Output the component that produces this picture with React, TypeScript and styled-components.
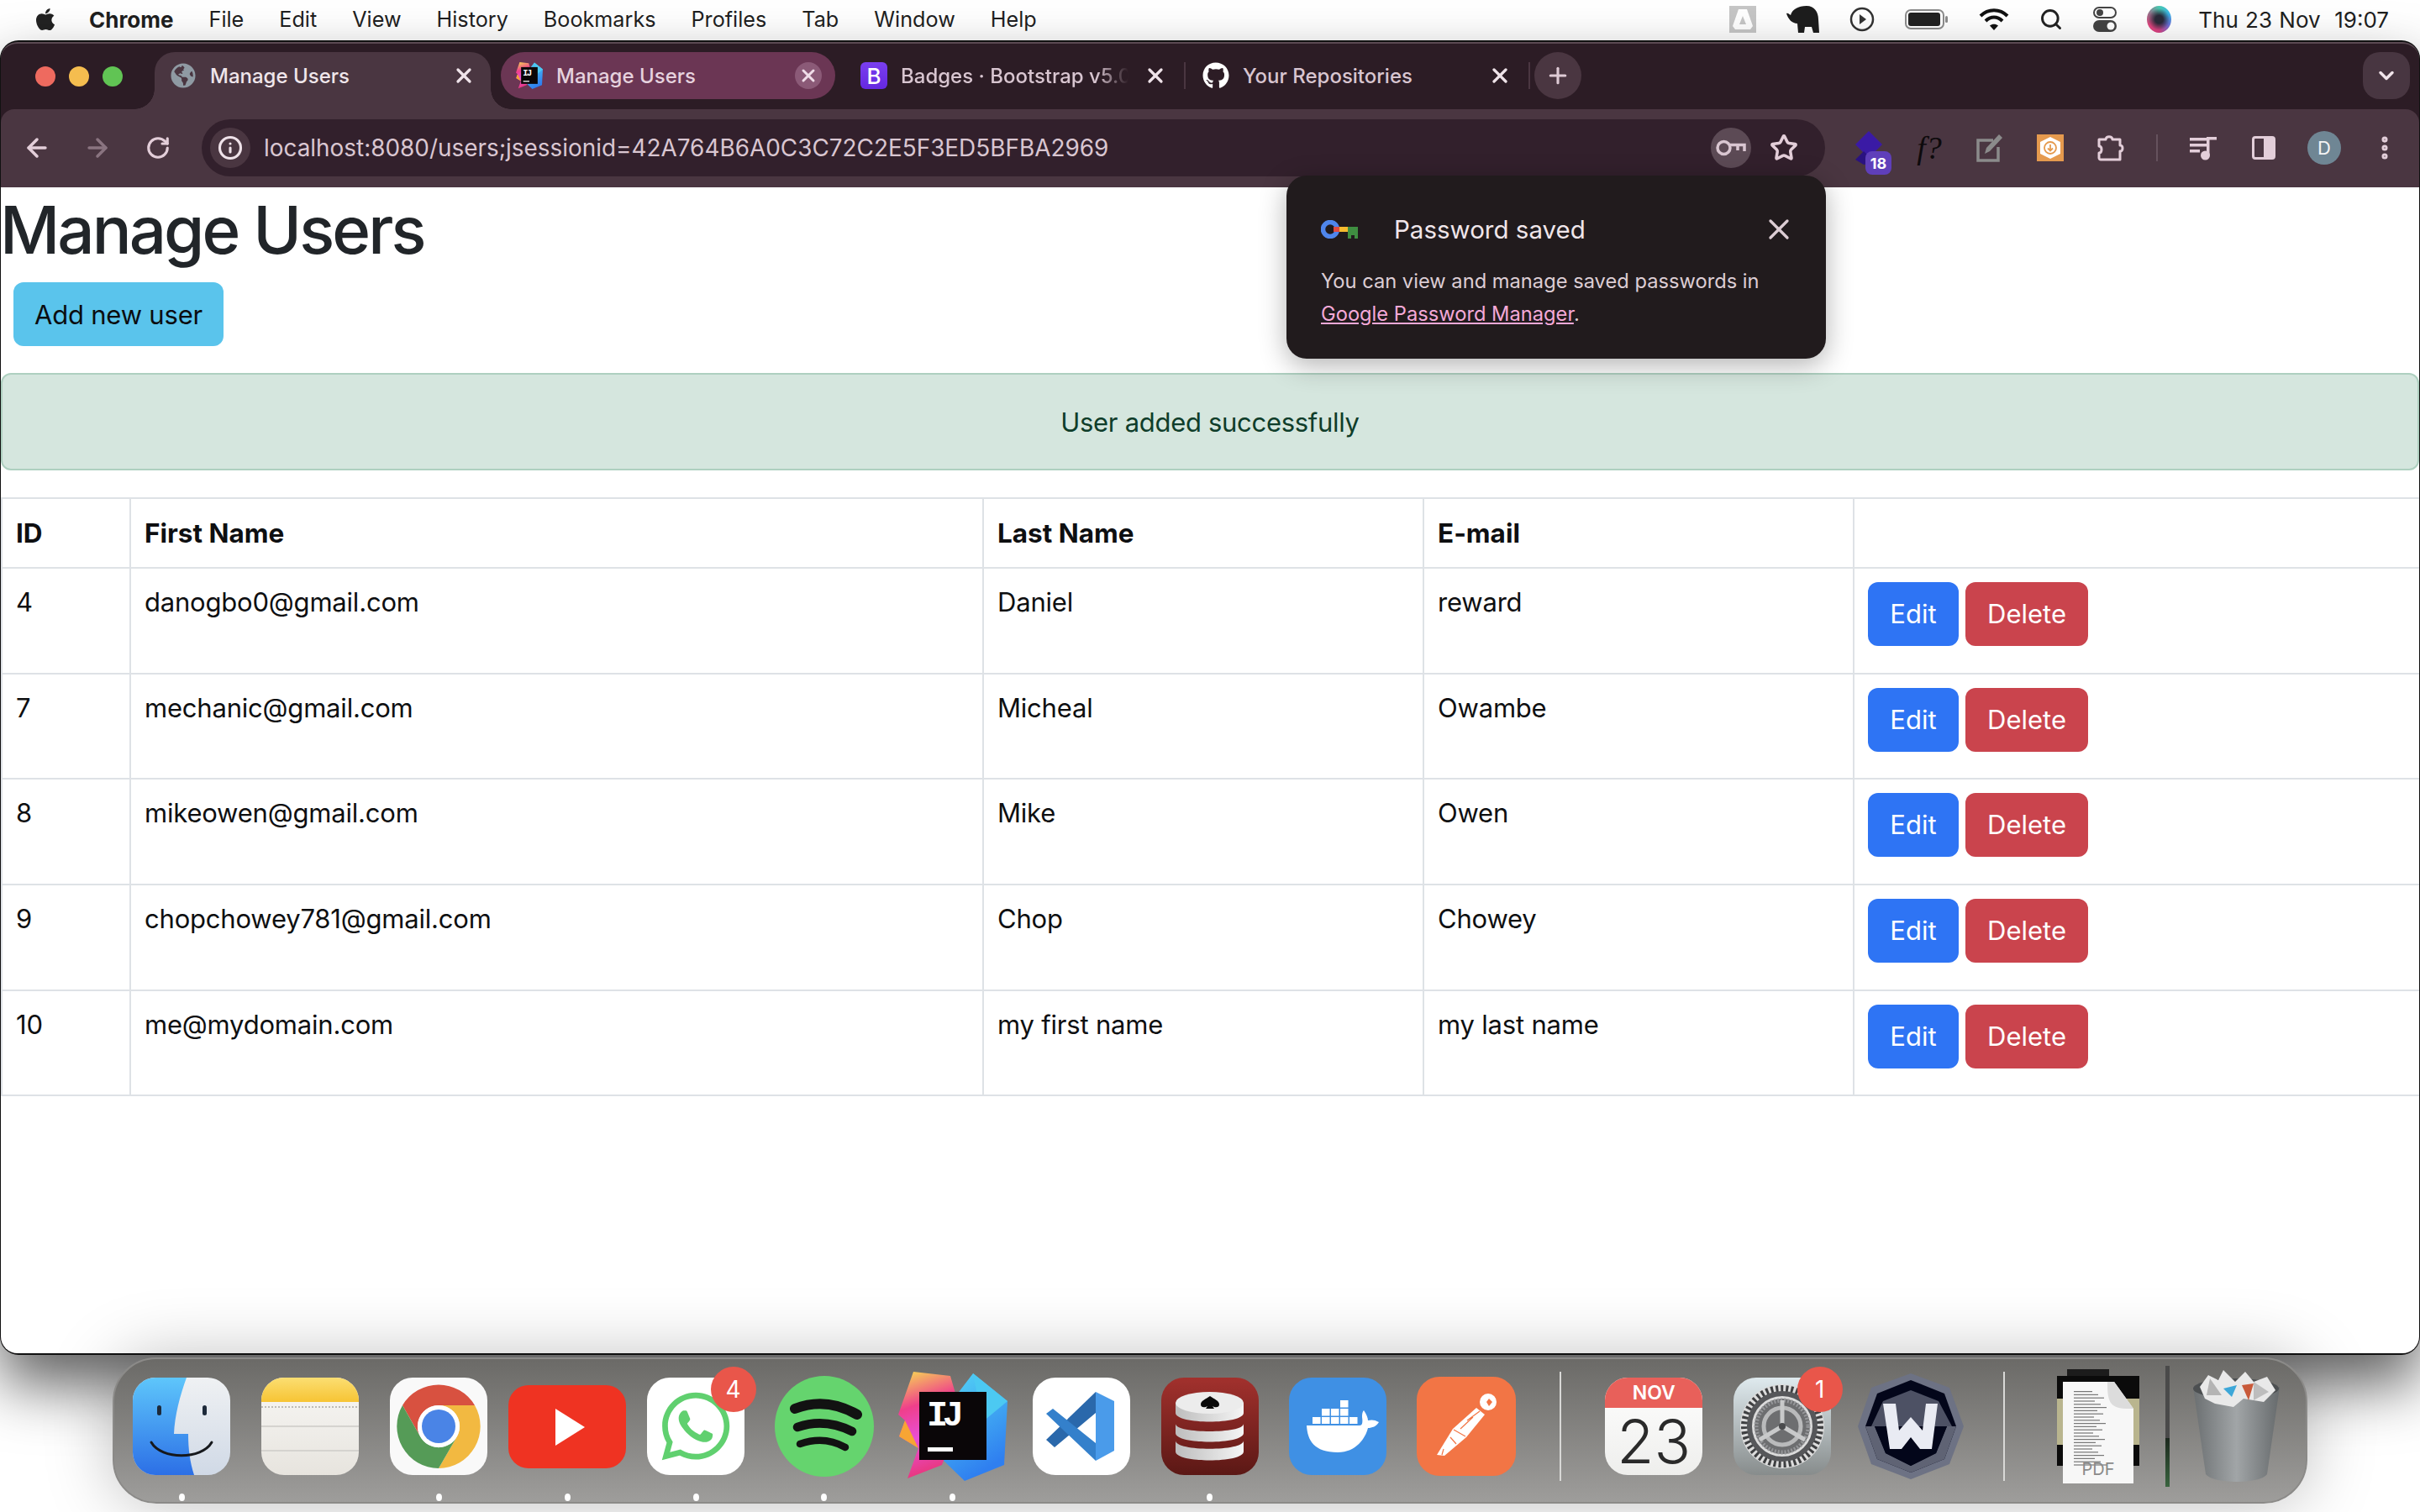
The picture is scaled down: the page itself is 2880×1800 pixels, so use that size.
import React from 'react'
import styled, { createGlobalStyle } from 'styled-components'
import { FaApple, FaGithub, FaGlobeAmericas, FaWhatsapp } from 'react-icons/fa'
import { ArrowLeft, ArrowRight, ChevronDown, EllipsisVertical, Info, Plus, RotateCw, Search, Star, X } from 'lucide-react'

const GlobalStyle = createGlobalStyle`
  html, body { margin: 0; padding: 0; background: #fff; }
  * { box-sizing: border-box; }
  body { font-family: Inter, "Liberation Sans", sans-serif; }
`

const users = [
  { id: 4, email: 'danogbo0@gmail.com', first: 'Daniel', last: 'reward' },
  { id: 7, email: 'mechanic@gmail.com', first: 'Micheal', last: 'Owambe' },
  { id: 8, email: 'mikeowen@gmail.com', first: 'Mike', last: 'Owen' },
  { id: 9, email: 'chopchowey781@gmail.com', first: 'Chop', last: 'Chowey' },
  { id: 10, email: 'me@mydomain.com', first: 'my first name', last: 'my last name' },
]

const menuItems = ['File', 'Edit', 'View', 'History', 'Bookmarks', 'Profiles', 'Tab', 'Window', 'Help']

const IntellijLogo = ({ size = 130 }: { size?: number }) => (
  <svg width={size} height={size} viewBox="0 0 130 130">
    <defs>
      <linearGradient id="ijBlue" x1="0" y1="0" x2="0.4" y2="1">
        <stop offset="0" stopColor="#55d8f5" />
        <stop offset="1" stopColor="#2f7ff0" />
      </linearGradient>
      <linearGradient id="ijPink" x1="0.3" y1="0" x2="0.5" y2="1">
        <stop offset="0" stopColor="#f6c65a" />
        <stop offset="0.3" stopColor="#ef3f8b" />
        <stop offset="0.6" stopColor="#e94fd8" />
        <stop offset="1" stopColor="#e8336f" />
      </linearGradient>
    </defs>
    <polygon points="89,2 130,35 126,111 79,130 52,104 60,40" fill="url(#ijBlue)" />
    <polygon points="89,2 130,35 100,60" fill="#4cc9f2" />
    <polygon points="18,0 62,5 75,50 52,111 11,127 24,91 1,77 8,58 0,51" fill="url(#ijPink)" />
    <polygon points="1,77 8,58 24,91" fill="#f7a534" />
    <rect x="25" y="24" width="80" height="81" fill="#0a0608" />
    <text x="34" y="64" fontFamily="Liberation Mono, monospace" fontWeight="700" fontSize="42" fill="#fff" textLength="44">IJ</text>
    <rect x="35" y="90" width="30" height="5" fill="#fff" />
  </svg>
)

const FinderIcon = () => (
  <svg width="116" height="116" viewBox="0 0 116 116">
    <defs>
      <linearGradient id="finderBlue" x1="0" y1="0" x2="0" y2="1">
        <stop offset="0" stopColor="#5ec6fb" />
        <stop offset="1" stopColor="#2c6fe6" />
      </linearGradient>
      <linearGradient id="finderLight" x1="0" y1="0" x2="0" y2="1">
        <stop offset="0" stopColor="#eff1f3" />
        <stop offset="1" stopColor="#d0d9e6" />
      </linearGradient>
    </defs>
    <rect width="116" height="116" rx="27" fill="url(#finderLight)" />
    <path d="M27 0 H64 C56 22 50 45 49 67 H66 C66 85 68 100 73 116 H27 A27 27 0 0 1 0 89 V27 A27 27 0 0 1 27 0 Z" fill="url(#finderBlue)" />
    <rect x="29" y="33" width="5" height="12" rx="2.5" fill="#1d2a3a" />
    <rect x="83" y="33" width="5" height="12" rx="2.5" fill="#1d2a3a" />
    <path d="M22 77 C34 98 82 98 94 77" fill="none" stroke="#16181c" strokeWidth="3" strokeLinecap="round" />
  </svg>
)

const NotesIcon = () => (
  <svg width="116" height="116" viewBox="0 0 116 116">
    <defs>
      <linearGradient id="notesTop" x1="0" y1="0" x2="0" y2="1">
        <stop offset="0" stopColor="#fbde72" />
        <stop offset="1" stopColor="#f7c434" />
      </linearGradient>
      <linearGradient id="notesBody" x1="0" y1="0" x2="0" y2="1">
        <stop offset="0" stopColor="#f8f7f5" />
        <stop offset="1" stopColor="#e7e4de" />
      </linearGradient>
      <clipPath id="notesClip"><rect width="116" height="116" rx="27" /></clipPath>
    </defs>
    <g clipPath="url(#notesClip)">
      <rect width="116" height="116" fill="url(#notesBody)" />
      <rect width="116" height="29" fill="url(#notesTop)" />
      <line x1="0" y1="35" x2="116" y2="35" stroke="#bdbbb6" strokeWidth="2" strokeDasharray="2 2" />
      <rect y="57" width="116" height="2" fill="#d5d3cf" />
      <rect y="86" width="116" height="2" fill="#d5d3cf" />
    </g>
  </svg>
)

const ChromeIcon = () => (
  <svg width="116" height="116" viewBox="0 0 116 116">
    <rect width="116" height="116" rx="27" fill="#f9f9f9" />
    <path d="M58 33 L101 33 A50 50 0 0 0 15 33 L36 70 A25 25 0 0 1 58 33 Z" fill="#d85140" />
    <path d="M101 33 A50 50 0 0 1 58 108 L80 70 A25 25 0 0 0 58 33 Z" fill="#f2b941" />
    <path d="M15 33 A50 50 0 0 0 58 108 L80 70 A25 25 0 0 1 36 70 Z" fill="#559b57" />
    <circle cx="58" cy="58" r="25" fill="#fff" />
    <circle cx="58" cy="58" r="20" fill="#4a84e6" />
  </svg>
)

const YoutubeIcon = () => (
  <svg width="140" height="99" viewBox="0 0 140 99">
    <rect width="140" height="99" rx="24" fill="#ef3322" />
    <polygon points="56,28 91,50 56,72" fill="#fff" />
  </svg>
)

const SpotifyIcon = () => (
  <svg width="118" height="120" viewBox="0 0 118 120">
    <ellipse cx="59" cy="60" rx="59" ry="60" fill="#65d46e" />
    <g fill="none" stroke="#121212" strokeLinecap="round">
      <path d="M24 39 C50 29 74 32 98 46" strokeWidth="12" />
      <path d="M27 61 C50 53 72 56 92 66" strokeWidth="10.5" />
      <path d="M30 81 C50 74 68 76 84 85" strokeWidth="8.5" />
    </g>
  </svg>
)

const VscodeIcon = () => (
  <svg width="116" height="116" viewBox="0 0 116 116">
    <rect width="116" height="116" rx="27" fill="#fff" />
    <path d="M75 17 V42 L26 83 L16 74 Z" fill="#2a68ab" />
    <path d="M16 43 L24 37 L75 78 V99 Z" fill="#3480cb" />
    <path d="M75 17 L97 28 V87 L75 99 Z" fill="#4a9bea" />
  </svg>
)

const DatabaseIcon = () => (
  <svg width="116" height="116" viewBox="0 0 116 116">
    <defs>
      <linearGradient id="dbBack" x1="0" y1="0" x2="0" y2="1">
        <stop offset="0" stopColor="#a2312d" />
        <stop offset="1" stopColor="#5b1815" />
      </linearGradient>
      <linearGradient id="dbSide" x1="0" y1="0" x2="1" y2="0">
        <stop offset="0" stopColor="#bdbdbd" />
        <stop offset="1" stopColor="#f5f5f5" />
      </linearGradient>
    </defs>
    <rect width="116" height="116" rx="27" fill="url(#dbBack)" />
    <path d="M17 75 C17 88 98 88 98 75 V88 C98 102 17 102 17 88 Z" fill="url(#dbSide)" />
    <path d="M17 55 C17 67 98 67 98 55 V66 C98 80 17 80 17 66 Z" fill="url(#dbSide)" />
    <path d="M17 30 V42 C17 56 98 56 98 42 V30 Z" fill="url(#dbSide)" />
    <ellipse cx="57.500" cy="30" rx="40.500" ry="13" fill="#ececec" />
    <path d="M58 22 C63 26 69 27 69 32 C69 36 64 36 61 34 L63 37 H53 L55 34 C52 36 47 36 47 32 C47 27 53 26 58 22 Z" fill="#0a0a0a" />
  </svg>
)

const DockerIcon = () => (
  <svg width="116" height="116" viewBox="0 0 116 116">
    <rect width="116" height="116" rx="27" fill="#3f90e4" />
    <g fill="#fff">
      {[28, 39, 50, 61, 72].map(x => <rect key={x} x={x} y="47" width="9.500" height="8" />)}
      {[39, 50, 61].map(x => <rect key={x} x={x} y="37" width="9.500" height="8.500" />)}
      <rect x="61" y="27" width="9.500" height="8.500" />
      <path d="M21 57 H84 C87 57 88 54 87 47 C87 42 88 40 89 39 C92 43 94 48 94 51 C98 50 102 50 107 53 C104 58 99 60 94 60 C91 72 80 89 58 89 C30 89 22 75 21 57 Z" />
    </g>
  </svg>
)

const PostmanIcon = () => (
  <svg width="118" height="118" viewBox="0 0 118 118">
    <rect width="118" height="118" rx="27" fill="#f27545" />
    <ellipse cx="85" cy="30" rx="10" ry="10" fill="#fff" />
    <path d="M86 26 L90 30 L86 35 L83 30 Z" fill="#f27545" />
    <path d="M71 37 L81 45 L59 72 L33 94 L24 93 L43 62 Z" fill="#fff" />
    <path d="M60 52 L75 41 M52 62 L67 48 M44 63 L58 71 M40 72 L47 80 M32 86 L30 93" stroke="#f27545" strokeWidth="1.200" />
  </svg>
)

const SettingsIcon = () => (
  <svg width="116" height="116" viewBox="0 0 116 116">
    <defs>
      <linearGradient id="setBack" x1="0" y1="0" x2="0" y2="1">
        <stop offset="0" stopColor="#dfeaee" />
        <stop offset="1" stopColor="#878c8c" />
      </linearGradient>
    </defs>
    <rect width="116" height="116" rx="27" fill="url(#setBack)" />
    <circle cx="58" cy="58" r="50" fill="#dcdcdc" />
    <circle cx="58" cy="58" r="45" fill="none" stroke="#3e3f41" strokeWidth="8" strokeDasharray="3 3" />
    <circle cx="58" cy="58" r="39" fill="none" stroke="#56575a" strokeWidth="6" />
    <circle cx="58" cy="58" r="33" fill="#6d6e70" />
    <circle cx="58" cy="58" r="31" fill="none" stroke="#96979a" strokeWidth="5" strokeDasharray="2 2" />
    <circle cx="58" cy="58" r="22" fill="none" stroke="#b9babb" strokeWidth="5" />
    <path d="M58 58 L58 27 M58 58 L31 74 M58 58 L85 74" stroke="#c8c9ca" strokeWidth="5" />
    <circle cx="58" cy="58" r="4" fill="#4a4b4d" />
  </svg>
)

const WindscribeIcon = () => (
  <svg width="126" height="126" viewBox="0 0 126 126">
    <polygon points="63,0 109,17 126,63 109,108 63,126 16,108 0,63 16,17" fill="#6d7284" />
    <polygon points="63,8 103,24 117,63 103,102 63,118 23,102 9,63 23,24" fill="#03061a" />
    <polygon points="63,20 96,33 112,63 16,63 30,33" fill="#4d5164" />
    <polygon points="9,63 20,63 33,95 63,110 93,95 106,63 117,63 103,102 63,118 23,102" fill="#5f6374" />
    <polygon points="20,63 33,95 63,110 93,95 106,63" fill="#03061a" />
    <path d="M30 36 H45 L49 68 L63 52 L77 68 L81 36 H95 L88 90 H74 L63 76 L52 90 H38 Z" fill="#e9ebf3" />
  </svg>
)

const PdfPreview = () => (
  <svg width="98" height="136" viewBox="0 0 98 136">
    <rect x="12" y="0" width="50" height="14" fill="#1c1c1c" />
    <rect x="0" y="8" width="98" height="107" fill="#0b0b0b" />
    <rect x="0" y="35" width="98" height="55" fill="#b9b58e" />
    <path d="M7 15 H68 L91 47 V136 H7 Z" fill="#f7f7f7" />
    <path d="M60 15 C60 40 62 48 91 47 L68 15 Z" fill="#dcdcdc" />
    {Array.from({ length: 24 }).map((_, i) => (
      <rect key={i} x="20" y={26 + i * 3.8} width={22 + ((i * 7) % 18)} height="1.200" fill="#777" />
    ))}
    <text x="49" y="126" textAnchor="middle" fontSize="20" fill="#8a8a8a" fontFamily="Inter, sans-serif">PDF</text>
  </svg>
)

const TrashIcon = () => (
  <svg width="103" height="134" viewBox="0 0 103 134">
    <defs>
      <linearGradient id="binSide" x1="0" y1="0" x2="1" y2="0">
        <stop offset="0" stopColor="#6b6f71" />
        <stop offset="0.5" stopColor="#a1a5a7" />
        <stop offset="1" stopColor="#666a6c" />
      </linearGradient>
    </defs>
    <path d="M0 20 C20 28 83 28 103 20 L88 124 C80 136 24 136 15 124 Z" fill="url(#binSide)" />
    <ellipse cx="51" cy="22" rx="51" ry="12" fill="#4c4f51" />
    <polygon points="8,20 18,6 30,12 36,0 50,14 62,2 72,14 88,8 98,24 84,38 60,34 48,44 26,40 14,34" fill="#e9e9e9" />
    <polygon points="20,10 34,30 16,30" fill="#b4b4b4" />
    <polygon points="72,14 90,26 72,36" fill="#bdbdbd" />
    <polygon points="36,22 52,18 46,32" fill="#3da7d8" />
    <polygon points="58,18 72,16 66,36" fill="#c85a3a" />
  </svg>
)

const KeyColored = () => (
  <svg width="44" height="22" viewBox="0 0 44 22">
    <circle cx="11" cy="11" r="8.500" fill="none" stroke="#4f86ec" strokeWidth="5.500" />
    <rect x="15" y="8" width="8" height="6" fill="#e04a3f" />
    <rect x="22" y="8" width="10" height="6" fill="#f6bb2e" />
    <path d="M32 8 H44 V22 H40 V18 H36 V22 H32 Z" fill="#3f8e41" />
  </svg>
)

const KeyOutline = () => (
  <svg width="36" height="20" viewBox="0 0 36 20" fill="none" stroke="#d9c6d1" strokeWidth="3.500">
    <circle cx="9.500" cy="10" r="7.500" />
    <path d="M17 6.500 H34 V14 M26 6.500 V13" />
  </svg>
)

const ExtStack = () => (
  <svg width="32" height="40" viewBox="0 0 32 40">
    <polygon points="16,0 32,16 16,32 0,16" fill="#3a1aa5" />
    <polygon points="10,24 24,38 10,40 0,34" fill="#2a1280" />
  </svg>
)

const PencilBox = () => (
  <svg width="32" height="34" viewBox="0 0 32 34" fill="none">
    <path d="M20 8 H2 V32 H26 V16" stroke="#8b8b8b" strokeWidth="3.500" />
    <path d="M10 24 L12 17 L27 1 L31 5 L16 21 Z" fill="#8b8b8b" />
  </svg>
)

const OrangeExt = () => (
  <svg width="32" height="32" viewBox="0 0 32 32">
    <rect width="32" height="32" fill="#e59a4e" />
    <polygon points="16,3 28,9 28,23 16,29 4,23 4,9" fill="#fff" />
    <circle cx="16" cy="16" r="7" fill="none" stroke="#e59a4e" strokeWidth="1.800" />
    <path d="M16 12 V19 M13 16.500 L16 19.500 L19 16.500" stroke="#e59a4e" strokeWidth="1.800" fill="none" />
  </svg>
)

const PuzzleOutline = () => (
  <svg width="34" height="32" viewBox="0 0 34 32" fill="none" stroke="#e3ced9" strokeWidth="3" strokeLinejoin="round">
    <path d="M3 6 H11 C11 1.500 19 1.500 19 6 H28 V13 C32 12.500 32 20.500 28 20 V30 H5 C4 30 3 29 3 28 V22 C7 22 7 14 3 14 Z" />
  </svg>
)

const MusicQueue = () => (
  <svg width="32" height="30" viewBox="0 0 32 30" fill="#e3ced9">
    <rect x="0" y="3" width="20" height="3.500" />
    <rect x="0" y="10" width="20" height="3.500" />
    <rect x="0" y="17" width="12" height="3.500" />
    <rect x="20" y="2" width="12" height="3.500" />
    <rect x="20" y="2" width="3.500" height="22" />
    <circle cx="18.500" cy="24" r="5.500" />
  </svg>
)

const SidePanel = () => (
  <svg width="28" height="28" viewBox="0 0 28 28">
    <rect x="1.500" y="1.500" width="25" height="25" rx="2.500" fill="none" stroke="#e3ced9" strokeWidth="3" />
    <rect x="14" y="2" width="12" height="24" fill="#e3ced9" />
  </svg>
)

const DriveGlyph = () => (
  <svg width="32" height="32" viewBox="0 0 32 32">
    <rect width="32" height="32" fill="#c6c6c6" />
    <path d="M11 4 H21 L28 24 L25 28 H7 L4 24 Z" fill="#fff" />
    <polygon points="16,12 20,22 12,22" fill="#c6c6c6" />
  </svg>
)

const Elephant = () => (
  <svg width="39" height="32" viewBox="0 0 39 32" fill="#1d1d1d">
    <path d="M0 9 C2 8 3 10 5 11 C7 4 14 0 24 0 C33 0 38 7 38 16 L39 32 H32 L30 25 H22 L21 32 H14 L13 21 C7 21 2 16 0 9 Z" />
  </svg>
)

const PlayRing = () => (
  <svg width="30" height="30" viewBox="0 0 30 30">
    <circle cx="15" cy="15" r="13" fill="none" stroke="#333" strokeWidth="2.500" />
    <polygon points="12,9 20,15 12,21" fill="#333" />
  </svg>
)

const BatteryGlyph = () => (
  <svg width="52" height="24" viewBox="0 0 52 24">
    <rect x="1" y="1" width="45" height="22" rx="6" fill="none" stroke="#8d8d8d" strokeWidth="2" />
    <rect x="4" y="4" width="38" height="16" rx="3" fill="#222" />
    <rect x="48" y="8" width="3" height="8" rx="1.500" fill="#8d8d8d" />
  </svg>
)

const WifiGlyph = () => (
  <svg width="36" height="28" viewBox="0 0 36 28" fill="none" stroke="#111" strokeWidth="4">
    <path d="M2 10 C11 1 25 1 34 10" />
    <path d="M8 16 C14 10 22 10 28 16" />
    <path d="M18 27 L13 21.500 C16 19 20 19 23 21.500 Z" fill="#111" stroke="none" />
  </svg>
)

const ControlGlyph = () => (
  <svg width="28" height="30" viewBox="0 0 28 30">
    <rect x="1" y="1" width="26" height="12" rx="6" fill="#fff" stroke="#444" strokeWidth="2" />
    <circle cx="8" cy="7" r="4" fill="#444" />
    <rect y="16" width="28" height="14" rx="7" fill="#444" />
    <circle cx="21" cy="23" r="4.500" fill="#fff" />
  </svg>
)

const Screen = styled.div`
  width: 2880px;
  height: 1800px;
  display: flex;
  flex-direction: column;
  overflow: hidden;
  background: #fff;
`

const MenuBar = styled.div`
  height: 48px;
  flex: none;
  display: flex;
  align-items: center;
  padding: 0 37px 2px 40px;
  color: #1f1f1f;
  font-size: 25.2px;
`

const AppleMark = styled.div`
  width: 28px;
  margin-right: 38px;
  display: flex;
  color: #222;
`

const AppName = styled.span`
  font-weight: 700;
  font-size: 26px;
  margin-right: 42px;
`

const MenuItem = styled.span`
  margin-right: 42px;
`

const StatusIcons = styled.div`
  margin-left: auto;
  display: flex;
  align-items: center;
  gap: 36px;
  color: #222;
`

const Siri = styled.div`
  width: 29px;
  height: 32px;
  border-radius: 50%;
  background: radial-gradient(circle, #2a2a3a 0 22%, transparent 60%), conic-gradient(#48c9b0, #3bb6e8, #6a6fd8, #d6407f, #e0457f, #9a6f8a, #48c9b0);
`

const Clock = styled.span`
  margin-left: 32px;
  font-size: 26px;
  word-spacing: 1px;
  white-space: pre;
`

const Window = styled.div`
  position: relative;
  z-index: 1;
  height: 1565px;
  flex: none;
  display: flex;
  flex-direction: column;
  background: #2c1c25;
  border: 1px solid #111;
  border-top-width: 2px;
  border-bottom-width: 2px;
  border-radius: 22px;
  box-shadow: 0 36px 70px rgba(0, 0, 0, 0.62);
`

const TabStrip = styled.div`
  height: 80px;
  flex: none;
  display: flex;
  align-items: flex-start;
  padding-top: 10px;
  border-top: 2px solid #5b4a53;
  border-radius: 20px 20px 0 0;
`

const Lights = styled.div`
  width: 183px;
  flex: none;
  display: flex;
  gap: 16px;
  padding: 17px 0 0 41px;
`

const Light = styled.span<{ $color: string }>`
  width: 24px;
  height: 24px;
  border-radius: 50%;
  background: ${p => p.$color};
`

const Tab = styled.div<{ $width: number; $kind: 'active' | 'group' | 'plain' }>`
  position: relative;
  flex: none;
  width: ${p => p.$width}px;
  height: ${p => (p.$kind === 'active' ? 68 : 56)}px;
  margin-right: ${p => (p.$kind === 'plain' ? 0 : 12)}px;
  padding: 0 16px 0 18px;
  padding-bottom: ${p => (p.$kind === 'active' ? 12 : 0)}px;
  display: flex;
  align-items: center;
  gap: 16px;
  font-size: 24px;
  font-weight: 500;
  color: ${p => (p.$kind === 'active' ? '#f0e6eb' : p.$kind === 'group' ? '#e6d2de' : '#d8c5d0')};
  background: ${p => (p.$kind === 'active' ? '#4a3641' : p.$kind === 'group' ? '#6b3654' : 'transparent')};
  border-radius: ${p => (p.$kind === 'active' ? '24px 24px 0 0' : p.$kind === 'group' ? '28px' : '0')};

  ${p =>
    p.$kind === 'active' &&
    `
    &::before, &::after {
      content: '';
      position: absolute;
      bottom: 0;
      width: 24px;
      height: 24px;
    }
    &::before {
      left: -24px;
      background: radial-gradient(circle at 0 0, transparent 23.5px, #4a3641 24px);
    }
    &::after {
      right: -24px;
      background: radial-gradient(circle at 100% 0, transparent 23.5px, #4a3641 24px);
    }
  `}
`

const Favicon = styled.div`
  width: 32px;
  height: 32px;
  flex: none;
  display: flex;
  align-items: center;
  justify-content: center;
`

const BootstrapMark = styled.div`
  width: 32px;
  height: 32px;
  border-radius: 6px;
  background: linear-gradient(#7a3ff0, #6528e0);
  color: #fff;
  font-size: 26px;
  display: flex;
  align-items: center;
  justify-content: center;
`

const TabTitle = styled.span<{ $fade?: boolean }>`
  flex: 1;
  min-width: 0;
  white-space: nowrap;
  overflow: hidden;
  ${p => p.$fade && 'mask-image: linear-gradient(to right, #000 86%, transparent);'}
`

const TabClose = styled.div<{ $circle?: boolean }>`
  width: 32px;
  height: 32px;
  flex: none;
  border-radius: 50%;
  display: flex;
  align-items: center;
  justify-content: center;
  background: ${p => (p.$circle ? '#8b5a77' : 'transparent')};
  color: ${p => (p.$circle ? '#f0dde8' : '#efe3e9')};
`

const TabDivider = styled.div`
  width: 2px;
  height: 32px;
  margin: 12px 2px 0;
  flex: none;
  background: #4a3641;
`

const NewTab = styled.div`
  width: 56px;
  height: 56px;
  margin-left: 3px;
  flex: none;
  border-radius: 50%;
  background: #4a3641;
  color: #dfcbd6;
  display: flex;
  align-items: center;
  justify-content: center;
`

const TabMenu = styled.div`
  width: 56px;
  height: 56px;
  margin: 0 11px 0 auto;
  flex: none;
  border-radius: 20px;
  background: #483641;
  color: #f0e4ea;
  display: flex;
  align-items: center;
  justify-content: center;
`

const Toolbar = styled.div`
  height: 93px;
  flex: none;
  display: flex;
  align-items: center;
  padding: 0 7px 1px 7px;
  background: #4a3641;
  border-radius: 16px 16px 0 0;
`

const ToolSlot = styled.div<{ $dim?: boolean }>`
  position: relative;
  width: 72px;
  height: 56px;
  flex: none;
  display: flex;
  align-items: center;
  justify-content: center;
  color: ${p => (p.$dim ? '#8a7480' : '#e3ced9')};
`

const Omnibox = styled.div`
  width: 1932px;
  height: 68px;
  margin: 0 16px 0 16px;
  flex: none;
  display: flex;
  align-items: center;
  padding: 0 32px 0 10px;
  border-radius: 34px;
  background: #32202c;
`

const SiteInfo = styled.div`
  width: 48px;
  height: 48px;
  flex: none;
  border-radius: 50%;
  background: #4a3641;
  color: #efe2e9;
  display: flex;
  align-items: center;
  justify-content: center;
`

const Url = styled.span`
  margin-left: 16px;
  font-size: 27.9px;
  color: #d9c6d1;
  white-space: nowrap;
`

const KeyButton = styled.div`
  width: 48px;
  height: 48px;
  margin-left: auto;
  border-radius: 50%;
  background: #5c4a55;
  display: flex;
  align-items: center;
  justify-content: center;
`

const StarButton = styled.div`
  margin-left: 22px;
  display: flex;
  color: #e3ced9;
`

const CountBadge = styled.span`
  position: absolute;
  left: 32px;
  top: 32px;
  width: 31px;
  height: 28px;
  border-radius: 8px;
  background: #5f3fba;
  color: #fff;
  font-size: 18px;
  font-weight: 700;
  display: flex;
  align-items: center;
  justify-content: center;
`

const FormulaGlyph = styled.span`
  font-family: "Liberation Serif", serif;
  font-style: italic;
  font-size: 38px;
  color: #0d0a0c;
`

const ToolDivider = styled.div`
  width: 2px;
  height: 32px;
  margin: 0 18px;
  flex: none;
  background: #65525d;
`

const Avatar = styled.div`
  width: 40px;
  height: 40px;
  border-radius: 50%;
  background: #6f8694;
  color: #f4f4f4;
  font-size: 22px;
  display: flex;
  align-items: center;
  justify-content: center;
`

const Page = styled.div`
  flex: 1;
  min-height: 0;
  background: #fff;
  color: #212529;
  border-radius: 0 0 20px 20px;
  overflow: hidden;
`

const Heading = styled.h1`
  margin: 3px 0 14px -1px;
  font-size: 78px;
  font-weight: 500;
  line-height: 96px;
  letter-spacing: -2.9px;
`

const AddButton = styled.button`
  display: block;
  width: 250px;
  height: 76px;
  margin-left: 15px;
  border: none;
  border-radius: 12px;
  background: #5ac4ec;
  color: #0b0d10;
  font: inherit;
  font-size: 31px;
  letter-spacing: -0.2px;
`

const Alert = styled.div`
  height: 116px;
  margin: 32px 0 32px;
  border: 2px solid #aed0c0;
  border-radius: 12px;
  background: #d5e6de;
  color: #0f3d2a;
  font-size: 31px;
  letter-spacing: -0.3px;
  display: flex;
  align-items: center;
  justify-content: center;
`

const Table = styled.table`
  width: 2878px;
  table-layout: fixed;
  border-collapse: collapse;
  font-size: 31px;
  letter-spacing: -0.2px;
  color: #0e0f11;
`

const HeadRow = styled.tr`
  height: 83px;
`

const BodyRow = styled.tr`
  height: 125.7px;
`

const HeadCell = styled.th`
  padding: 16px;
  border: 2px solid #dee2e6;
  text-align: left;
  font-size: 31.5px;
  font-weight: 700;
  letter-spacing: 0;
`

const Cell = styled.td`
  padding: 16px;
  border: 2px solid #dee2e6;
  vertical-align: top;
  line-height: 48px;
`

const ActionGroup = styled.div`
  display: flex;
  gap: 8px;
`

const ActionButton = styled.button<{ $tone: 'edit' | 'delete' }>`
  height: 76px;
  padding: 0;
  width: ${p => (p.$tone === 'edit' ? 108 : 146)}px;
  border: none;
  border-radius: 12px;
  background: ${p => (p.$tone === 'edit' ? '#2e74f4' : '#ca444d')};
  color: #fff;
  font: inherit;
`

const Popup = styled.div`
  position: absolute;
  left: 1530px;
  top: 159px;
  width: 642px;
  height: 218px;
  padding: 37px 36px 0 41px;
  border-radius: 24px;
  background: #211b1d;
  box-shadow: 0 8px 32px rgba(0, 0, 0, 0.3);
  color: #dccdd4;
  font-size: 23.700px;
`

const PopupHead = styled.div`
  display: flex;
  align-items: center;
  height: 54px;
  margin-bottom: 15px;
`

const PopupTitle = styled.span`
  margin-left: 43px;
  font-size: 29.500px;
  color: #f0e6ea;
`

const PopupClose = styled.div`
  margin-left: auto;
  display: flex;
  color: #dccdd4;
`

const PopupText = styled.p`
  margin: 0;
  line-height: 39px;
  white-space: nowrap;
`

const PopupLink = styled.a`
  color: #f4a9d8;
  text-decoration: underline;
`

const DockArea = styled.div`
  position: relative;
  z-index: 2;
  flex: 1;
  padding: 3px 134px 0;
`

const Dock = styled.div`
  height: 174px;
  display: flex;
  padding: 0 8px 0 4px;
  border: 2px solid #8b8a88;
  border-radius: 52px;
  background: linear-gradient(#6b6a67, #9e9d9b);
  box-shadow: 0 0 80px rgba(0, 0, 0, 0.26);
`

const DockSlot = styled.div<{ $width?: number }>`
  position: relative;
  width: ${p => p.$width ?? 152.9}px;
  flex: none;
  display: flex;
  align-items: center;
  justify-content: center;
  padding-bottom: 10px;
`

const WhiteTile = styled.div`
  width: 116px;
  height: 116px;
  border-radius: 27px;
  background: #fff;
  color: #60d06f;
  display: flex;
  align-items: center;
  justify-content: center;
`

const CalendarTile = styled.div`
  width: 116px;
  height: 116px;
  border-radius: 27px;
  overflow: hidden;
  background: linear-gradient(#fff, #eeeeec);
  display: flex;
  flex-direction: column;
  align-items: center;
  color: #2a2a2a;
`

const CalendarMonth = styled.div`
  width: 100%;
  height: 36px;
  background: #e8605a;
  color: #fff;
  font-size: 23px;
  font-weight: 600;
  display: flex;
  align-items: center;
  justify-content: center;
`

const CalendarDay = styled.div`
  font-size: 72px;
  font-weight: 300;
  line-height: 80px;
`

const Pip = styled.span`
  position: absolute;
  left: 50%;
  bottom: 1.5px;
  width: 7px;
  height: 9px;
  margin-left: -3.5px;
  border-radius: 50%;
  background: #fff;
`

const RedBadge = styled.span`
  position: absolute;
  left: 94px;
  top: 9px;
  width: 54px;
  height: 54px;
  border-radius: 50%;
  background: #e9564a;
  color: #fff;
  font-size: 28px;
  display: flex;
  align-items: center;
  justify-content: center;
`

const DockRule = styled.div`
  width: 2px;
  height: 130px;
  background: #d8d8d6;
`

const DarkRule = styled.div`
  width: 5px;
  height: 144px;
  background: linear-gradient(#4a4a4a 0 60%, #1d2a1f 60%, #39643f);
`

export default function App() {
  return (
    <Screen>
      <GlobalStyle />
      <MenuBar>
        <AppleMark><FaApple size={30} /></AppleMark>
        <AppName>Chrome</AppName>
        {menuItems.map(item => <MenuItem key={item}>{item}</MenuItem>)}
        <StatusIcons>
          <DriveGlyph />
          <Elephant />
          <PlayRing />
          <BatteryGlyph />
          <WifiGlyph />
          <Search size={28} strokeWidth={2.5} />
          <ControlGlyph />
          <Siri />
        </StatusIcons>
        <Clock>Thu 23 Nov  19:07</Clock>
      </MenuBar>

      <Window>
        <TabStrip>
          <Lights>
            <Light $color="#ee6a5f" />
            <Light $color="#f5bd4f" />
            <Light $color="#61c454" />
          </Lights>
          <Tab $width={400} $kind="active">
            <Favicon><FaGlobeAmericas size={30} color="#8f9aa3" /></Favicon>
            <TabTitle>Manage Users</TabTitle>
            <TabClose><X size={28} strokeWidth={2.8} /></TabClose>
          </Tab>
          <Tab $width={398} $kind="group">
            <Favicon><IntellijLogo size={32} /></Favicon>
            <TabTitle>Manage Users</TabTitle>
            <TabClose $circle><X size={24} strokeWidth={3} /></TabClose>
          </Tab>
          <Tab $width={401} $kind="plain">
            <Favicon><BootstrapMark>B</BootstrapMark></Favicon>
            <TabTitle $fade>Badges · Bootstrap v5.0</TabTitle>
            <TabClose><X size={28} strokeWidth={2.8} /></TabClose>
          </Tab>
          <TabDivider />
          <Tab $width={404} $kind="plain">
            <Favicon><FaGithub size={32} color="#fff" /></Favicon>
            <TabTitle>Your Repositories</TabTitle>
            <TabClose><X size={28} strokeWidth={2.8} /></TabClose>
          </Tab>
          <TabDivider />
          <NewTab><Plus size={30} strokeWidth={2.5} /></NewTab>
          <TabMenu><ChevronDown size={28} strokeWidth={3} /></TabMenu>
        </TabStrip>

        <Toolbar>
          <ToolSlot><ArrowLeft size={34} strokeWidth={2.5} /></ToolSlot>
          <ToolSlot $dim><ArrowRight size={34} strokeWidth={2.5} /></ToolSlot>
          <ToolSlot><RotateCw size={30} strokeWidth={2.5} /></ToolSlot>
          <Omnibox>
            <SiteInfo><Info size={30} strokeWidth={2.5} /></SiteInfo>
            <Url>localhost:8080/users;jsessionid=42A764B6A0C3C72C2E5F3ED5BFBA2969</Url>
            <KeyButton><KeyOutline /></KeyButton>
            <StarButton><Star size={34} strokeWidth={2.5} /></StarButton>
          </Omnibox>
          <ToolSlot><ExtStack /><CountBadge>18</CountBadge></ToolSlot>
          <ToolSlot><FormulaGlyph>f?</FormulaGlyph></ToolSlot>
          <ToolSlot><PencilBox /></ToolSlot>
          <ToolSlot><OrangeExt /></ToolSlot>
          <ToolSlot><PuzzleOutline /></ToolSlot>
          <ToolDivider />
          <ToolSlot><MusicQueue /></ToolSlot>
          <ToolSlot><SidePanel /></ToolSlot>
          <ToolSlot><Avatar>D</Avatar></ToolSlot>
          <ToolSlot><EllipsisVertical size={34} strokeWidth={3} /></ToolSlot>
        </Toolbar>

        <Page>
          <Heading>Manage Users</Heading>
          <AddButton>Add new user</AddButton>
          <Alert>User added successfully</Alert>
          <Table>
            <colgroup>
              <col width="153" />
              <col width="1015" />
              <col width="524" />
              <col width="512" />
              <col width="674" />
            </colgroup>
            <thead>
              <HeadRow>
                <HeadCell>ID</HeadCell>
                <HeadCell>First Name</HeadCell>
                <HeadCell>Last Name</HeadCell>
                <HeadCell>E-mail</HeadCell>
                <HeadCell />
              </HeadRow>
            </thead>
            <tbody>
              {users.map(u => (
                <BodyRow key={u.id}>
                  <Cell>{u.id}</Cell>
                  <Cell>{u.email}</Cell>
                  <Cell>{u.first}</Cell>
                  <Cell>{u.last}</Cell>
                  <Cell>
                    <ActionGroup>
                      <ActionButton $tone="edit">Edit</ActionButton>
                      <ActionButton $tone="delete">Delete</ActionButton>
                    </ActionGroup>
                  </Cell>
                </BodyRow>
              ))}
            </tbody>
          </Table>
        </Page>

        <Popup>
          <PopupHead>
            <KeyColored />
            <PopupTitle>Password saved</PopupTitle>
            <PopupClose><X size={40} strokeWidth={2} /></PopupClose>
          </PopupHead>
          <PopupText>You can view and manage saved passwords in</PopupText>
          <PopupText><PopupLink>Google Password Manager</PopupLink>.</PopupText>
        </Popup>
      </Window>

      <DockArea>
        <Dock>
          <DockSlot><FinderIcon /><Pip /></DockSlot>
          <DockSlot><NotesIcon /></DockSlot>
          <DockSlot><ChromeIcon /><Pip /></DockSlot>
          <DockSlot><YoutubeIcon /><Pip /></DockSlot>
          <DockSlot><WhiteTile><FaWhatsapp size={92} /></WhiteTile><RedBadge>4</RedBadge><Pip /></DockSlot>
          <DockSlot><SpotifyIcon /><Pip /></DockSlot>
          <DockSlot><IntellijLogo /><Pip /></DockSlot>
          <DockSlot><VscodeIcon /></DockSlot>
          <DockSlot><DatabaseIcon /><Pip /></DockSlot>
          <DockSlot><DockerIcon /></DockSlot>
          <DockSlot><PostmanIcon /></DockSlot>
          <DockSlot $width={70}><DockRule /></DockSlot>
          <DockSlot>
            <CalendarTile>
              <CalendarMonth>NOV</CalendarMonth>
              <CalendarDay>23</CalendarDay>
            </CalendarTile>
          </DockSlot>
          <DockSlot><SettingsIcon /><RedBadge>1</RedBadge></DockSlot>
          <DockSlot><WindscribeIcon /></DockSlot>
          <DockSlot $width={70}><DockRule /></DockSlot>
          <DockSlot><PdfPreview /></DockSlot>
          <DockSlot $width={12}><DarkRule /></DockSlot>
          <DockSlot><TrashIcon /></DockSlot>
        </Dock>
      </DockArea>
    </Screen>
  )
}
